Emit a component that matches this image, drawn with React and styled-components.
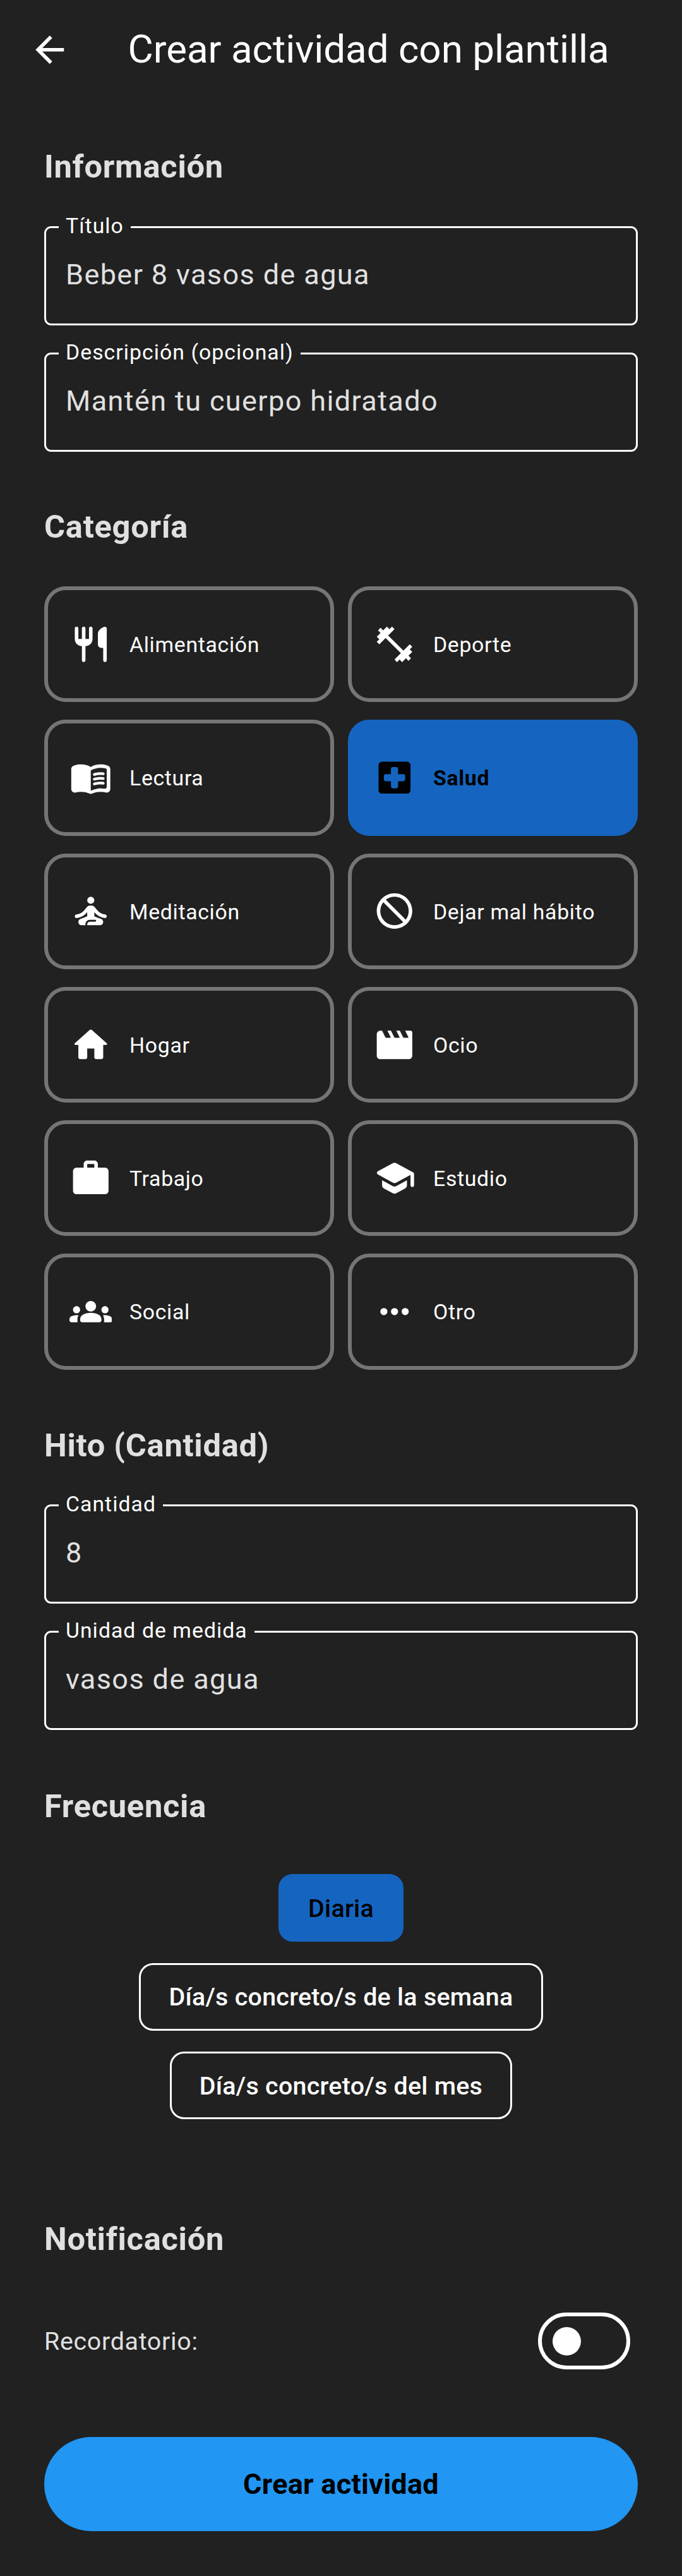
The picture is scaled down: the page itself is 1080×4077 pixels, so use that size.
import React, { useState } from "react";
import styled, { createGlobalStyle } from "styled-components";

const GlobalStyle = createGlobalStyle`
  *, *::before, *::after { box-sizing: border-box; }
  body {
    margin: 0;
    background: #212121;
    color: #ffffff;
    font-family: Roboto, "Liberation Sans", sans-serif;
  }
  button { font-family: inherit; cursor: pointer; }
`;

const Screen = styled.main`
  width: 1080px;
  height: 4077px;
  background: #212121;
`;

const AppBar = styled.header`
  display: flex;
  align-items: center;
  gap: 90px;
  height: 157px;
  padding-left: 45px;
`;

const Title = styled.h1`
  margin: 0;
  padding-bottom: 2px;
  font-size: 61.875px;
  font-weight: 400;
  line-height: 78px;
  white-space: nowrap;
`;

const Icon = styled.svg`
  display: block;
  flex: none;
  width: 67.5px;
  height: 67.5px;
  fill: currentColor;
`;

const Form = styled.form`
  padding: 0 70px;
`;

const Section = styled.section`
  padding-top: ${(p) => p.$top}px;
`;

const Heading = styled.h2`
  margin: 0;
  color: #e0e0e0;
  font-size: 50.625px;
  font-weight: 700;
  line-height: 68px;
  letter-spacing: 0.72px;
`;

const Fields = styled.div`
  display: flex;
  flex-direction: column;
  gap: 24px;
  padding-top: ${(p) => p.$top || 41}px;
`;

const FieldBox = styled.fieldset`
  height: 176px;
  margin: 0;
  padding: 30px 31px 0 20px;
  border: 3px solid #ffffff;
  border-radius: 11px;
`;

const FieldLabel = styled.legend`
  padding: 0 11px 2px;
  font-size: 33.75px;
  line-height: 38px;
  letter-spacing: 1.05px;
`;

const FieldValue = styled.div`
  padding-left: 11px;
  color: #e0e0e0;
  font-size: 45px;
  line-height: 52px;
  letter-spacing: 1.4px;
`;

const Grid = styled.div`
  display: grid;
  grid-template-columns: 1fr 1fr;
  gap: 28px 22px;
  padding-top: 60px;
`;

const Category = styled.button`
  display: flex;
  align-items: center;
  gap: 28px;
  height: 183.25px;
  padding: 0 33.5px;
  border: 6px solid ${(p) => (p.$selected ? "#1565c0" : "#757575")};
  border-radius: 34px;
  background: ${(p) => (p.$selected ? "#1565c0" : "transparent")};
  color: ${(p) => (p.$selected ? "#000000" : "#ffffff")};
  font-size: 33.75px;
  font-weight: ${(p) => (p.$selected ? 700 : 400)};
  letter-spacing: 0.7px;
  white-space: nowrap;
`;

const CategoryName = styled.span`
  padding-top: 2px;
`;

const Choices = styled.div`
  display: flex;
  flex-direction: column;
  align-items: center;
  gap: 33.6px;
  padding-top: 73px;
`;

const Choice = styled.button`
  height: 107px;
  padding: 1px 44px 0;
  border: 3px solid ${(p) => (p.$selected ? "#1565c0" : "#ffffff")};
  border-radius: 22.5px;
  background: ${(p) => (p.$selected ? "#1565c0" : "transparent")};
  color: ${(p) => (p.$selected ? "#000000" : "#ffffff")};
  font-size: 39.375px;
  font-weight: 500;
  letter-spacing: 0.28px;
`;

const ReminderRow = styled.div`
  display: flex;
  align-items: center;
  justify-content: space-between;
  height: 90px;
  margin-top: 82px;
  padding-right: 12px;
`;

const ReminderLabel = styled.span`
  color: #e0e0e0;
  font-size: 39.375px;
  letter-spacing: 0.7px;
`;

const Switch = styled.button`
  display: flex;
  align-items: center;
  justify-content: ${(p) => (p.$on ? "flex-end" : "flex-start")};
  width: 146px;
  height: 90px;
  padding: 0 16.5px;
  border: 6px solid #ffffff;
  border-radius: 45px;
  background: transparent;
`;

const Thumb = styled.span`
  width: 45px;
  height: 45px;
  border-radius: 50%;
  background: #ffffff;
`;

const Submit = styled.button`
  display: block;
  width: 100%;
  height: 149px;
  margin-top: 107px;
  border: 0;
  border-radius: 75px;
  background: #2196f3;
  color: #000000;
  font-size: 45px;
  font-weight: 700;
  letter-spacing: 0.28px;
`;

const icons = {
  back: <path d="M20 11H7.83l5.59-5.59L12 4l-8 8 8 8 1.41-1.41L7.83 13H20v-2z" />,
  food: (
    <path d="M16 6v6c0 1.1.9 2 2 2h1v7c0 .55.45 1 1 1s1-.45 1-1V3.13c0-.65-.61-1.13-1.24-.98C17.6 2.68 16 4.51 16 6zm-5 3H9V3c0-.55-.45-1-1-1s-1 .45-1 1v6H5V3c0-.55-.45-1-1-1s-1 .45-1 1v6c0 2.21 1.79 4 4 4v8c0 .55.45 1 1 1s1-.45 1-1v-8c2.21 0 4-1.79 4-4V3c0-.55-.45-1-1-1s-1 .45-1 1v6z" />
  ),
  sport: (
    <path d="M20.57 14.86 22 13.43 20.57 12 17 15.57 8.43 7 12 3.43 10.57 2 9.14 3.43 7.71 2 5.57 4.14 4.14 2.71 2.71 4.14l1.43 1.43L2 7.71l1.43 1.43L2 10.57 3.43 12 7 8.43 15.57 17 12 20.57 13.43 22l1.43-1.43L16.29 22l2.14-2.14 1.43 1.43 1.43-1.43-1.43-1.43L22 16.29z" />
  ),
  book: (
    <>
      <path d="M17.5 4.5c-1.95 0-4.05.4-5.5 1.5-1.45-1.1-3.55-1.5-5.5-1.5-1.45 0-2.99.22-4.28.79C1.49 5.62 1 6.33 1 7.14v11.28c0 1.3 1.22 2.26 2.48 1.94.98-.25 2.02-.36 3.02-.36 1.56 0 3.22.26 4.56.92.6.3 1.28.3 1.87 0 1.34-.67 3-.92 4.56-.92 1 0 2.04.11 3.02.36 1.26.33 2.48-.63 2.48-1.94V7.14c0-.81-.49-1.52-1.22-1.85-1.28-.57-2.82-.79-4.27-.79zM21 17.23c0 .63-.58 1.09-1.2.98-.75-.14-1.53-.2-2.3-.2-1.7 0-4.15.65-5.5 1.5V8c1.35-.85 3.8-1.5 5.5-1.5.92 0 1.83.09 2.7.28.46.1.8.51.8.98v9.47z" />
      <path d="M13.98 11.01c-.32 0-.61-.2-.71-.52-.13-.39.09-.82.48-.94 1.54-.5 3.53-.66 5.36-.45.41.05.71.42.66.83-.05.41-.42.71-.83.66-1.62-.19-3.39-.04-4.73.39-.08.01-.16.03-.23.03z" />
      <path d="M13.98 13.67c-.32 0-.61-.2-.71-.52-.13-.39.09-.82.48-.94 1.54-.5 3.53-.66 5.36-.45.41.05.71.42.66.83-.05.41-.42.71-.83.66-1.62-.19-3.39-.04-4.73.39-.08.01-.16.03-.23.03z" />
      <path d="M13.98 16.33c-.32 0-.61-.2-.71-.52-.13-.39.09-.82.48-.94 1.54-.5 3.53-.66 5.36-.45.41.05.71.42.66.83-.05.41-.42.71-.83.66-1.62-.19-3.39-.04-4.73.39-.08.01-.16.03-.23.03z" />
    </>
  ),
  health: (
    <path
      fillRule="evenodd"
      d="M5 3h14c1.1 0 2 .9 2 2v14c0 1.1-.9 2-2 2H5c-1.1 0-2-.9-2-2V5c0-1.1.9-2 2-2zM11 6c-.55 0-1 .45-1 1v3H7c-.55 0-1 .45-1 1v2c0 .55.45 1 1 1h3v3c0 .55.45 1 1 1h2c.55 0 1-.45 1-1v-3h3c.55 0 1-.45 1-1v-2c0-.55-.45-1-1-1h-3V7c0-.55-.45-1-1-1z"
    />
  ),
  meditation: (
    <>
      <circle cx="12" cy="6" r="2" />
      <path d="M21 15.02c0-.54-.43-.98-.97-1.04-1.86-.2-3.4-1.13-4.63-2.66l-1.34-1.6c-.38-.46-.94-.72-1.53-.72h-1.05c-.59 0-1.15.26-1.53.72l-1.34 1.6c-1.23 1.53-2.77 2.46-4.63 2.66-.55.06-.98.5-.98 1.04 0 .55.48 1.01 1.03.96 2.36-.2 4.4-1.37 5.97-3.23V15l-3.88 1.55C5.45 16.82 5 17.48 5 18.21 5 19.2 5.8 20 6.79 20H9v-.5c0-1.38 1.12-2.5 2.5-2.5h3c.28 0 .5.22.5.5s-.22.5-.5.5h-3c-.83 0-1.5.67-1.5 1.5v.5h7.21c.99 0 1.79-.8 1.79-1.79 0-.73-.45-1.39-1.12-1.66L14 15v-2.25c1.57 1.86 3.61 3.03 5.97 3.23.55.05 1.03-.41 1.03-.96z" />
    </>
  ),
  block: (
    <path d="M12 2C6.48 2 2 6.48 2 12s4.48 10 10 10 10-4.48 10-10S17.52 2 12 2zm0 18c-4.42 0-8-3.58-8-8 0-1.85.63-3.55 1.69-4.9L16.9 18.31C15.55 19.37 13.85 20 12 20zm6.31-3.1L7.1 5.69C8.45 4.63 10.15 4 12 4c4.42 0 8 3.58 8 8 0 1.85-.63 3.55-1.69 4.9z" />
  ),
  home: (
    <path d="M10 19v-5h4v5c0 .55.45 1 1 1h3c.55 0 1-.45 1-1v-7h1.7c.46 0 .68-.57.33-.87L12.67 3.6c-.38-.34-.96-.34-1.34 0l-8.36 7.53c-.34.3-.13.87.33.87H5v7c0 .55.45 1 1 1h3c.55 0 1-.45 1-1z" />
  ),
  movie: (
    <path d="M18 4l1.82 3.64c.08.16-.04.36-.22.36h-1.98c-.38 0-.73-.21-.89-.55L15 4h-2l1.82 3.64c.08.16-.04.36-.22.36h-1.98c-.38 0-.73-.21-.89-.55L10 4H8l1.82 3.64c.08.16-.04.36-.22.36H7.62c-.38 0-.73-.21-.9-.55L5 4H4c-1.1 0-2 .9-2 2v12c0 1.1.9 2 2 2h16c1.1 0 2-.9 2-2V5c0-.55-.45-1-1-1h-3z" />
  ),
  work: (
    <path d="M20 6h-4V4c0-1.11-.89-2-2-2h-4c-1.11 0-2 .89-2 2v2H4c-1.11 0-2 .89-2 2v11c0 1.11.89 2 2 2h16c1.11 0 2-.89 2-2V8c0-1.11-.89-2-2-2zm-6 0h-4V4h4v2z" />
  ),
  school: (
    <path d="M5 13.18v2.81c0 .73.4 1.41 1.04 1.76l5 2.73c.6.33 1.32.33 1.92 0l5-2.73c.64-.35 1.04-1.03 1.04-1.76v-2.81l-6.04 3.3c-.6.33-1.32.33-1.92 0L5 13.18zm6.04-9.66l-8.43 4.6c-.69.38-.69 1.38 0 1.76l8.43 4.6c.6.33 1.32.33 1.92 0L21 10.09V16c0 .55.45 1 1 1s1-.45 1-1V9.59c0-.37-.2-.7-.52-.88l-9.52-5.19c-.6-.32-1.32-.32-1.92 0z" />
  ),
  groups: (
    <path d="M12 12.75c1.63 0 3.07.39 4.24.9 1.08.48 1.76 1.56 1.76 2.73V17c0 .55-.45 1-1 1H7c-.55 0-1-.45-1-1v-.61c0-1.18.68-2.26 1.76-2.73 1.17-.52 2.61-.91 4.24-.91zM4 13c1.1 0 2-.9 2-2s-.9-2-2-2-2 .9-2 2 .9 2 2 2zm1.13 1.1c-.37-.06-.74-.1-1.13-.1-.99 0-1.93.21-2.78.58C.48 14.9 0 15.62 0 16.43V17c0 .55.45 1 1 1h3.5v-1.61c0-.83.23-1.61.63-2.29zM20 13c1.1 0 2-.9 2-2s-.9-2-2-2-2 .9-2 2 .9 2 2 2zm4 3.43c0-.81-.48-1.53-1.22-1.85-.85-.37-1.79-.58-2.78-.58-.39 0-.76.04-1.13.1.4.68.63 1.46.63 2.29V18H23c.55 0 1-.45 1-1v-.57zM12 6c1.66 0 3 1.34 3 3s-1.34 3-3 3-3-1.34-3-3 1.34-3 3-3z" />
  ),
  more: (
    <>
      <circle cx="6" cy="12" r="2" />
      <circle cx="12" cy="12" r="2" />
      <circle cx="18" cy="12" r="2" />
    </>
  ),
};

const categories = [
  ["Alimentación", "food"],
  ["Deporte", "sport"],
  ["Lectura", "book"],
  ["Salud", "health"],
  ["Meditación", "meditation"],
  ["Dejar mal hábito", "block"],
  ["Hogar", "home"],
  ["Ocio", "movie"],
  ["Trabajo", "work"],
  ["Estudio", "school"],
  ["Social", "groups"],
  ["Otro", "more"],
];

const frequencies = ["Diaria", "Día/s concreto/s de la semana", "Día/s concreto/s del mes"];

function Glyph({ name }) {
  return (
    <Icon viewBox="0 0 24 24" aria-hidden="true">
      {icons[name]}
    </Icon>
  );
}

function Field({ label, value }) {
  return (
    <FieldBox>
      <FieldLabel>{label}</FieldLabel>
      <FieldValue>{value}</FieldValue>
    </FieldBox>
  );
}

export default function App() {
  const [category, setCategory] = useState("Salud");
  const [frequency, setFrequency] = useState("Diaria");
  const [reminder, setReminder] = useState(false);

  return (
    <>
      <GlobalStyle />
      <Screen>
        <AppBar>
          <Glyph name="back" />
          <Title>Crear actividad con plantilla</Title>
        </AppBar>
        <Form onSubmit={(e) => e.preventDefault()}>
          <Section $top={73}>
            <Heading>Información</Heading>
            <Fields>
              <Field label="Título" value="Beber 8 vasos de agua" />
              <Field label="Descripción (opcional)" value="Mantén tu cuerpo hidratado" />
            </Fields>
          </Section>
          <Section $top={85}>
            <Heading>Categoría</Heading>
            <Grid>
              {categories.map(([name, icon]) => (
                <Category
                  key={name}
                  type="button"
                  $selected={name === category}
                  onClick={() => setCategory(name)}
                >
                  <Glyph name={icon} />
                  <CategoryName>{name}</CategoryName>
                </Category>
              ))}
            </Grid>
          </Section>
          <Section $top={86.5}>
            <Heading>Hito (Cantidad)</Heading>
            <Fields $top={40}>
              <Field label="Cantidad" value="8" />
              <Field label="Unidad de medida" value="vasos de agua" />
            </Fields>
          </Section>
          <Section $top={87}>
            <Heading>Frecuencia</Heading>
            <Choices>
              {frequencies.map((name) => (
                <Choice
                  key={name}
                  type="button"
                  $selected={name === frequency}
                  onClick={() => setFrequency(name)}
                >
                  {name}
                </Choice>
              ))}
            </Choices>
          </Section>
          <Section $top={156}>
            <Heading>Notificación</Heading>
            <ReminderRow>
              <ReminderLabel>Recordatorio:</ReminderLabel>
              <Switch
                type="button"
                role="switch"
                aria-checked={reminder}
                $on={reminder}
                onClick={() => setReminder(!reminder)}
              >
                <Thumb />
              </Switch>
            </ReminderRow>
          </Section>
          <Submit type="submit">Crear actividad</Submit>
        </Form>
      </Screen>
    </>
  );
}
